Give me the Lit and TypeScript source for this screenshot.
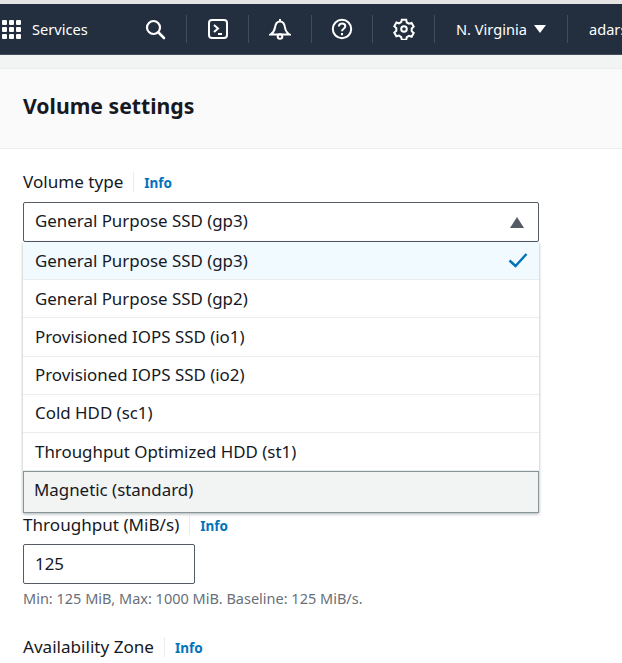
import { LitElement, html, css, svg } from 'lit';
import { customElement } from 'lit/decorators.js';

const OPTIONS = [
  'General Purpose SSD (gp3)',
  'General Purpose SSD (gp2)',
  'Provisioned IOPS SSD (io1)',
  'Provisioned IOPS SSD (io2)',
  'Cold HDD (sc1)',
  'Throughput Optimized HDD (st1)',
  'Magnetic (standard)',
];

const icon = (body: unknown, size = 22) => html`
  <svg width=${size} height=${size} viewBox="0 0 22 22" fill="none" stroke="#fff" stroke-width="2">${body}</svg>
`;

@customElement('app-root')
export class AppRoot extends LitElement {
  static styles = css`
    :host {
      display: block;
      width: 622px;
      height: 663px;
      overflow: hidden;
      background: #fff;
      font-family: 'Noto Sans', sans-serif;
      font-size: 16.9px;
      color: #16191f;
    }
    .top-strip {
      height: 4px;
      background: #e4e4e4;
    }
    nav {
      display: flex;
      align-items: center;
      height: 51px;
      box-sizing: border-box;
      background: #232f3e;
      border-bottom: 1px solid #414d5c;
      color: #fff;
      font-size: 14.6px;
      white-space: nowrap;
      overflow: hidden;
    }
    .services {
      display: flex;
      align-items: center;
      gap: 11px;
      width: 134px;
      padding-left: 2px;
      box-sizing: border-box;
      flex: none;
    }
    .grid {
      display: grid;
      grid-template-columns: repeat(3, 5px);
      grid-auto-rows: 5px;
      gap: 2px;
    }
    .grid i {
      background: #fff;
      border-radius: 1px;
    }
    .nav-btn {
      display: flex;
      align-items: center;
      justify-content: center;
      flex: none;
      height: 28px;
      box-sizing: border-box;
      border-right: 1px solid #414d5c;
    }
    .w-search { width: 53px; padding-right: 10px; }
    .w-term { width: 62px; }
    .w-bell { width: 63px; }
    .w-help { width: 61px; }
    .w-gear { width: 62px; }
    .region {
      width: 133px;
      gap: 7px;
    }
    .user {
      padding-left: 21px;
    }
    .caret {
      width: 0;
      height: 0;
      border-left: 6px solid transparent;
      border-right: 6px solid transparent;
      border-top: 8px solid #fff;
    }
    .band {
      height: 13px;
      background: #f2f3f3;
      border-bottom: 1px solid #eaeded;
    }
    .panel-head {
      height: 80px;
      box-sizing: border-box;
      padding: 0 23px 6px;
      display: flex;
      align-items: center;
      background: #fafafa;
      border-bottom: 1px solid #eaeded;
    }
    h2 {
      margin: 0;
      font-size: 21.2px;
      font-weight: 700;
      line-height: 26px;
    }
    .body {
      padding: 21px 23px 0;
    }
    .label {
      display: flex;
      align-items: center;
      height: 24px;
      line-height: 24px;
      font-size: 17.1px;
    }
    .info {
      margin-left: 10px;
      padding-left: 10px;
      border-left: 1px solid #eaeded;
      height: 20px;
      line-height: 22px;
      font-size: 13.5px;
      font-weight: 700;
      color: #0073bb;
    }
    .select-wrap {
      position: relative;
      width: 516px;
      margin-top: 8px;
      margin-bottom: 271px;
    }
    .select {
      display: flex;
      align-items: center;
      justify-content: space-between;
      box-sizing: border-box;
      height: 40px;
      padding: 0 14px 3px 11px;
      border: 1px solid #545b64;
      border-radius: 2px;
      background: #fff;
    }
    .up {
      width: 0;
      height: 0;
      margin-top: 3px;
      border-left: 7px solid transparent;
      border-right: 7px solid transparent;
      border-bottom: 11px solid #545b64;
    }
    .menu {
      position: absolute;
      left: 0;
      top: 40px;
      width: 516px;
      box-sizing: border-box;
      background: #fff;
      box-shadow: 0 1px 3px rgba(0, 28, 36, 0.35);
    }
    .opt {
      display: flex;
      align-items: center;
      justify-content: space-between;
      box-sizing: border-box;
      height: 38.2px;
      padding: 0 11px 1px 12px;
      border-bottom: 1px solid #eaeded;
    }
    .opt.selected {
      background: #f1faff;
    }
    .opt.hover {
      height: 42px;
      padding: 0 11px 6px 10px;
      background: #f2f3f3;
      border: 1px solid #879596;
    }
    .input {
      box-sizing: border-box;
      display: flex;
      align-items: center;
      width: 172px;
      height: 40px;
      margin-top: 7px;
      padding: 0 0 1px 11px;
      border: 1px solid #545b64;
      border-radius: 2px;
    }
    .hint {
      margin-top: 4px;
      font-size: 14.5px;
      line-height: 20px;
      color: #687078;
    }
    .zone {
      margin-top: 27px;
    }
  `;

  render() {
    return html`
      <div class="top-strip"></div>
      <nav>
        <div class="services">
          <div class="grid">${Array.from({ length: 9 }, () => html`<i></i>`)}</div>
          <span>Services</span>
        </div>
        <div class="nav-btn w-search">
          ${icon(svg`<circle cx="9.500" cy="9.500" r="6.500" stroke-width="2.200"/><path d="M14.500 14.500 20 20" stroke-width="2.600" stroke-linecap="round"/>`)}
        </div>
        <div class="nav-btn w-term">
          ${icon(svg`<rect x="2" y="2" width="18" height="18" rx="3"/><path d="m7 7 4 3.500L7 14M11 16h4"/>`)}
        </div>
        <div class="nav-btn w-bell">
          ${icon(svg`<path d="M1.500 16.500c3-2 4-3.500 4.500-7C6.500 5.500 8.500 3.500 11 3.500s4.500 2 5 6c.5 3.500 1.500 5 4.500 7zM11 1v2.500"/><circle cx="11" cy="18.500" r="2.300"/>`)}
        </div>
        <div class="nav-btn w-help">
          ${icon(svg`<circle cx="11" cy="11" r="9.200"/><path d="M7.800 8.500c.2-2 1.500-3 3.300-3 1.900 0 3.200 1.100 3.200 2.700 0 2.500-3.300 2.600-3.300 5"/><path d="M11 15v2.200"/>`)}
        </div>
        <div class="nav-btn w-gear">
          ${icon(svg`<path d="M8.800 1.800h4.400l.6 2.700 2.200 1.200 2.600-.8 2.100 3.700-2 1.900v2.600l2 1.900-2.100 3.700-2.600-.8-2.200 1.200-.6 2.700H8.800l-.6-2.700L6 17.500l-2.600.8-2.100-3.700 2-1.900v-2.600l-2-1.900 2.100-3.700 2.600.8 2.200-1.200z"/><circle cx="11" cy="11" r="2.800"/>`)}
        </div>
        <div class="nav-btn region"><span>N. Virginia</span><span class="caret"></span></div>
        <div class="user">adarsh</div>
      </nav>
      <div class="band"></div>
      <div class="panel-head"><h2>Volume settings</h2></div>
      <div class="body">
        <div class="label">Volume type<span class="info">Info</span></div>
        <div class="select-wrap">
          <div class="select"><span>${OPTIONS[0]}</span><span class="up"></span></div>
          <div class="menu">
            ${OPTIONS.map((o, i) => html`
              <div class="opt ${i === 0 ? 'selected' : ''} ${i === OPTIONS.length - 1 ? 'hover' : ''}">
                <span>${o}</span>
                ${i === 0
                  ? html`<svg width="20" height="16" viewBox="0 0 20 16" fill="none" stroke="#0073bb" stroke-width="2.400"><path d="M1.500 8.500 7.500 14 18.500 2"/></svg>`
                  : ''}
              </div>
            `)}
          </div>
        </div>
        <div class="label">Throughput (MiB/s)<span class="info">Info</span></div>
        <div class="input">125</div>
        <div class="hint">Min: 125 MiB, Max: 1000 MiB. Baseline: 125 MiB/s.</div>
        <div class="label zone">Availability Zone<span class="info">Info</span></div>
      </div>
    `;
  }
}
